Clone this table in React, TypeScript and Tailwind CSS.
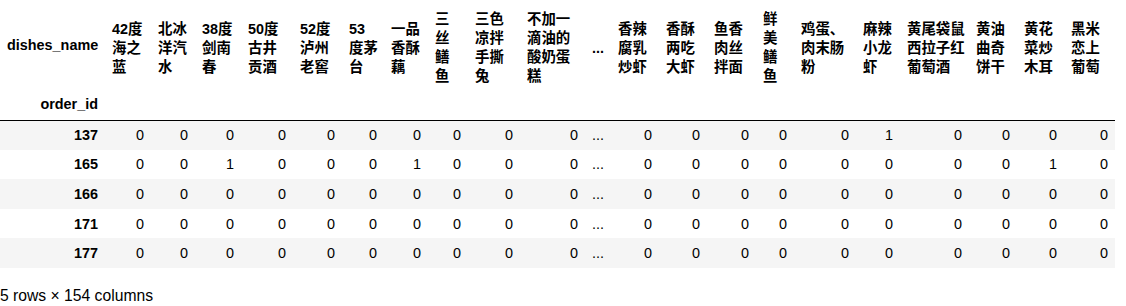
const FONT = "font-['Liberation_Sans','Noto_Sans_CJK_SC',sans-serif]";

type Column = { lines: string[]; width: number };

const columns: Column[] = [
  { lines: ['42度', '海之', '蓝'], width: 46 },
  { lines: ['北冰', '洋汽', '水'], width: 44 },
  { lines: ['38度', '剑南', '春'], width: 46 },
  { lines: ['50度', '古井', '贡酒'], width: 52 },
  { lines: ['52度', '泸州', '老窖'], width: 49 },
  { lines: ['53', '度茅', '台'], width: 42 },
  { lines: ['一品', '香酥', '藕'], width: 44 },
  { lines: ['三', '丝', '鳝', '鱼'], width: 40 },
  { lines: ['三色', '凉拌', '手撕', '兔'], width: 52 },
  { lines: ['不加一', '滴油的', '酸奶蛋', '糕'], width: 65 },
  { lines: ['...'], width: 26 },
  { lines: ['香辣', '腐乳', '炒虾'], width: 48 },
  { lines: ['香酥', '两吃', '大虾'], width: 48 },
  { lines: ['鱼香', '肉丝', '拌面'], width: 49 },
  { lines: ['鲜', '美', '鳝', '鱼'], width: 38 },
  { lines: ['鸡蛋、', '肉末肠', '粉'], width: 62 },
  { lines: ['麻辣', '小龙', '虾'], width: 44 },
  { lines: ['黄尾袋鼠', '西拉子红', '葡萄酒'], width: 69 },
  { lines: ['黄油', '曲奇', '饼干'], width: 48 },
  { lines: ['黄花', '菜炒', '木耳'], width: 47 },
  { lines: ['黑米', '恋上', '葡萄'], width: 51 },
];

// "..." marks the hidden middle column
const rows: { id: number; values: string[] }[] = [
  { id: 137, values: ['0', '0', '0', '0', '0', '0', '0', '0', '0', '0', '...', '0', '0', '0', '0', '0', '1', '0', '0', '0', '0'] },
  { id: 165, values: ['0', '0', '1', '0', '0', '0', '1', '0', '0', '0', '...', '0', '0', '0', '0', '0', '0', '0', '0', '1', '0'] },
  { id: 166, values: ['0', '0', '0', '0', '0', '0', '0', '0', '0', '0', '...', '0', '0', '0', '0', '0', '0', '0', '0', '0', '0'] },
  { id: 171, values: ['0', '0', '0', '0', '0', '0', '0', '0', '0', '0', '...', '0', '0', '0', '0', '0', '0', '0', '0', '0', '0'] },
  { id: 177, values: ['0', '0', '0', '0', '0', '0', '0', '0', '0', '0', '...', '0', '0', '0', '0', '0', '0', '0', '0', '0', '0'] },
];

export default function App() {
  return (
    <div className={`bg-white w-[1126px] h-[306px] overflow-hidden text-black ${FONT}`}>
      <table className="table-fixed border-collapse w-[1115px] text-[14.4px]">
        <colgroup>
          <col style={{ width: 105 }} />
          {columns.map((c, i) => (
            <col key={i} style={{ width: c.width }} />
          ))}
        </colgroup>
        <thead>
          <tr className="h-[96px]">
            <th className="px-[7px] py-0 pb-[6px] text-right align-middle font-bold leading-[16px]">dishes_name</th>
            {columns.map((c, i) => (
              <th
                key={i}
                className="px-[7px] py-0 text-left align-middle font-bold leading-[19px] whitespace-nowrap"
              >
                {c.lines.map((line, j) => (
                  <div key={j}>{line}</div>
                ))}
              </th>
            ))}
          </tr>
          <tr className="h-[24px]">
            <th className="px-[7px] py-0 text-right align-top font-bold leading-[16px] border-b border-black">
              order_id
            </th>
            {columns.map((_, i) => (
              <th key={i} className="border-b border-black" />
            ))}
          </tr>
        </thead>
        <tbody>
          {rows.map((r, i) => (
            <tr key={r.id} className={`h-[29.6px] ${i % 2 === 0 ? 'bg-[#f5f5f5]' : 'bg-white'}`}>
              <th className="px-[7px] py-0 text-right align-middle font-bold leading-[16px]">{r.id}</th>
              {r.values.map((v, j) => (
                <td key={j} className="px-[7px] py-0 text-right align-middle leading-[16px] whitespace-nowrap">
                  {v}
                </td>
              ))}
            </tr>
          ))}
        </tbody>
      </table>
      <p className="mt-[19px] text-[15.7px] leading-[18px]">5 rows × 154 columns</p>
    </div>
  );
}
